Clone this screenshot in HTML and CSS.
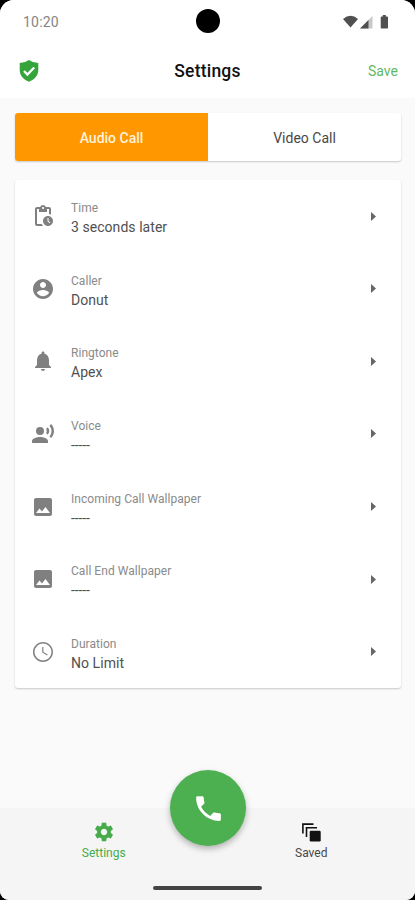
FILE: index.html
```html
<!DOCTYPE html>
<html lang="en">
<head>
<meta charset="utf-8">
<meta name="viewport" content="width=device-width, initial-scale=1">
<title>Settings</title>
<link rel="stylesheet" href="styles.css">
</head>
<body>
<div class="screen">
  <div class="statusbar">
    <span class="clock">10:20</span>
    <span class="camera"></span>
    <svg class="status-icons" width="46" height="14" viewBox="0 0 46 14">
      <path d="M0 4Q7.500-2.500 15 4L7.500 12.500Z" fill="#505050"/>
      <path d="M29.500 1V13.500H17Z" fill="#c9c9c9"/>
      <path d="M25.500 5V13.500H17Z" fill="#505050"/>
      <path d="M38.500 1.500h1.300V0h3v1.500h1.400q.8 0 .8.800v10.400q0 .8-.8.800h-5.700q-.8 0-.8-.8V2.300q0-.8.800-.8Z" fill="#505050"/>
    </svg>
  </div>
  <header class="appbar">
    <svg class="shield" width="24" height="24" viewBox="0 0 24 24">
      <path d="M12 1Q8.500 3.700 2.700 4.100V11c0 5.500 3.600 9.500 9.300 11.700 5.700-2.200 9.300-6.200 9.300-11.700V4.100Q15.500 3.700 12 1Z" fill="#35a53b"/>
      <path d="M7 12l3.400 3.500 6.800-7" fill="none" stroke="#fff" stroke-width="2.300"/>
    </svg>
    <h1 class="title">Settings</h1>
    <span class="save">Save</span>
  </header>
  <main class="content">
    <div class="tabs">
      <div class="tab tab-active">Audio Call</div>
      <div class="tab">Video Call</div>
    </div>
    <div class="card">
      <div class="row">
        <svg class="icon" viewBox="0 0 24 24"><path d="M17 12c-2.760 0-5 2.240-5 5s2.240 5 5 5 5-2.240 5-5-2.240-5-5-5zm1.650 7.350L16.500 17.200V14h1v2.790l1.850 1.850-.7.710zM18 3h-3.180C14.400 1.840 13.300 1 12 1s-2.400.84-2.820 2H6c-1.100 0-2 .9-2 2v15c0 1.100.9 2 2 2h6.110a6.743 6.743 0 0 1-1.420-2H6V5h2v3h8V5h2v5.080c.71.100 1.380.310 2 .600V5c0-1.100-.9-2-2-2zm-6 2c-.55 0-1-.45-1-1s.45-1 1-1 1 .45 1 1-.45 1-1 1z"/></svg>
        <div class="texts"><span class="label">Time</span><span class="value">3 seconds later</span></div>
        <svg class="arrow" viewBox="0 0 5 9"><path d="M0 0L5 4.500 0 9Z"/></svg>
      </div>
      <div class="row">
        <svg class="icon" viewBox="0 0 24 24"><path d="M12 2C6.480 2 2 6.480 2 12s4.480 10 10 10 10-4.480 10-10S17.520 2 12 2zm0 3c1.660 0 3 1.340 3 3s-1.340 3-3 3-3-1.340-3-3 1.340-3 3-3zm0 14.200c-2.500 0-4.710-1.280-6-3.220.03-1.990 4-3.080 6-3.080 1.990 0 5.970 1.090 6 3.080-1.290 1.940-3.500 3.220-6 3.220z"/></svg>
        <div class="texts"><span class="label">Caller</span><span class="value">Donut</span></div>
        <svg class="arrow" viewBox="0 0 5 9"><path d="M0 0L5 4.500 0 9Z"/></svg>
      </div>
      <div class="row">
        <svg class="icon" viewBox="0 0 24 24"><path d="M12 22c1.100 0 2-.9 2-2h-4c0 1.100.89 2 2 2zm6-6v-5c0-3.070-1.640-5.640-4.500-6.320V4c0-.83-.67-1.500-1.500-1.500s-1.500.67-1.500 1.500v.68C7.630 5.360 6 7.920 6 11v5l-2 2v1h16v-1l-2-2z"/></svg>
        <div class="texts"><span class="label">Ringtone</span><span class="value">Apex</span></div>
        <svg class="arrow" viewBox="0 0 5 9"><path d="M0 0L5 4.500 0 9Z"/></svg>
      </div>
      <div class="row">
        <svg class="icon" viewBox="0 0 24 24"><circle cx="9" cy="9" r="4"/><path d="M9 15c-2.670 0-8 1.340-8 4v2h16v-2c0-2.660-5.330-4-8-4zm7.760-9.640l-1.680 1.690c.84 1.180.84 2.710 0 3.890l1.680 1.690c2.020-2.020 2.020-5.070 0-7.270zM20.070 2l-1.630 1.630c2.770 3.020 2.770 7.560 0 10.740L20.070 16c3.900-3.890 3.910-9.950 0-14z"/></svg>
        <div class="texts"><span class="label">Voice</span><span class="value dashes">-----</span></div>
        <svg class="arrow" viewBox="0 0 5 9"><path d="M0 0L5 4.500 0 9Z"/></svg>
      </div>
      <div class="row">
        <svg class="icon" viewBox="0 0 24 24"><path d="M21 19V5c0-1.100-.9-2-2-2H5c-1.100 0-2 .9-2 2v14c0 1.100.9 2 2 2h14c1.100 0 2-.9 2-2zM8.500 13.500l2.500 3.010L14.500 12l4.500 6H5l3.500-4.500z"/></svg>
        <div class="texts"><span class="label">Incoming Call Wallpaper</span><span class="value dashes">-----</span></div>
        <svg class="arrow" viewBox="0 0 5 9"><path d="M0 0L5 4.500 0 9Z"/></svg>
      </div>
      <div class="row">
        <svg class="icon" viewBox="0 0 24 24"><path d="M21 19V5c0-1.100-.9-2-2-2H5c-1.100 0-2 .9-2 2v14c0 1.100.9 2 2 2h14c1.100 0 2-.9 2-2zM8.500 13.500l2.500 3.010L14.500 12l4.500 6H5l3.500-4.500z"/></svg>
        <div class="texts"><span class="label">Call End Wallpaper</span><span class="value dashes">-----</span></div>
        <svg class="arrow" viewBox="0 0 5 9"><path d="M0 0L5 4.500 0 9Z"/></svg>
      </div>
      <div class="row">
        <svg class="icon" viewBox="0 0 24 24"><path d="M11.990 2C6.470 2 2 6.480 2 12s4.470 10 9.990 10C17.520 22 22 17.520 22 12S17.520 2 11.990 2zM12 20.500a8.500 8.500 0 1 1 0-17 8.500 8.500 0 0 1 0 17zM12.400 7H11.200v5.600l4.900 3 .65-1-4.350-2.600z"/></svg>
        <div class="texts"><span class="label">Duration</span><span class="value">No Limit</span></div>
        <svg class="arrow" viewBox="0 0 5 9"><path d="M0 0L5 4.500 0 9Z"/></svg>
      </div>
    </div>
  </main>
  <nav class="bottombar">
    <div class="nav-item nav-active">
      <svg width="22" height="22" viewBox="0 0 24 24"><path d="M19.430 12.980c.04-.32.07-.64.07-.98s-.03-.66-.07-.98l2.110-1.650c.19-.15.24-.42.12-.64l-2-3.460c-.12-.22-.39-.3-.61-.22l-2.490 1c-.52-.4-1.080-.73-1.690-.98l-.38-2.650C14.460 2.180 14.250 2 14 2h-4c-.25 0-.46.18-.49.42l-.38 2.650c-.61.25-1.170.59-1.690.98l-2.490-1c-.23-.09-.49 0-.61.22l-2 3.460c-.13.22-.07.49.12.64l2.110 1.650c-.04.32-.07.65-.07.98s.03.66.07.98l-2.110 1.650c-.19.15-.24.42-.12.64l2 3.460c.12.22.39.3.61.22l2.490-1c.52.4 1.080.73 1.690.98l.38 2.650c.03.24.24.42.49.42h4c.25 0 .46-.18.49-.42l.38-2.650c.61-.25 1.170-.59 1.690-.98l2.490 1c.23.09.49 0 .61-.22l2-3.460c.12-.22.07-.49-.12-.64l-2.110-1.650zM12 15.500c-1.930 0-3.500-1.570-3.500-3.500s1.570-3.500 3.500-3.500 3.500 1.570 3.500 3.500-1.570 3.500-3.500 3.500z"/></svg>
      <span class="nav-label">Settings</span>
    </div>
    <div class="nav-item">
      <svg width="22" height="22" viewBox="0 0 22 22"><path d="M2.900 12.500V3.100H13.500M6.500 16V6.700H17" fill="none" stroke="#111" stroke-width="1.600"/><rect x="9.700" y="9.700" width="11" height="10.800" rx="1.200" fill="#111"/></svg>
      <span class="nav-label">Saved</span>
    </div>
    <div class="fab">
      <svg width="33" height="33" viewBox="0 0 24 24"><path d="M6.620 10.790c1.440 2.830 3.760 5.140 6.590 6.590l2.200-2.200c.27-.27.67-.36 1.020-.24 1.120.37 2.330.57 3.570.57.55 0 1 .45 1 1V20c0 .55-.45 1-1 1-9.390 0-17-7.610-17-17 0-.55.45-1 1-1h3.500c.55 0 1 .45 1 1 0 1.250.2 2.450.57 3.570.11.35.03.74-.25 1.020l-2.200 2.200z"/></svg>
    </div>
    <span class="home-indicator"></span>
  </nav>
</div>
</body>
</html>
```
FILE: styles.css
```css
* { box-sizing: border-box; }
body {
  margin: 0;
  background: #000;
  font-family: Roboto, "Liberation Sans", sans-serif;
}
.screen {
  width: 415px;
  height: 900px;
  display: flex;
  flex-direction: column;
  background: #fafafa;
  border-radius: 14px 14px 9px 9px;
  overflow: hidden;
}
.statusbar {
  height: 43px;
  flex: none;
  display: grid;
  grid-template-columns: 1fr 24px 1fr;
  align-items: center;
  padding: 0 26px 0 23px;
  background: #fff;
}
.clock { font-size: 14px; letter-spacing: 0.2px; color: #858585; padding-top: 1px; }
.camera { width: 24px; height: 24px; border-radius: 50%; background: #000; margin: -1px 0 0 1.500px; }
.status-icons { justify-self: end; }
.appbar {
  height: 55px;
  flex: none;
  display: grid;
  grid-template-columns: 1fr auto 1fr;
  align-items: center;
  padding: 0 17px;
  background: #fff;
}
.title { margin: 0; font-size: 17.500px; font-weight: 500; letter-spacing: 0.2px; color: #111; line-height: 24px; }
.save { justify-self: end; font-size: 14px; color: #5fb963; }
.content { flex: 1; padding: 15px 14px 0 15px; }
.tabs {
  height: 48px;
  display: flex;
  border-radius: 3px;
  overflow: hidden;
  background: #fff;
}
.tabs, .card { box-shadow: 0 1px 2px rgba(0, 0, 0, 0.2); }
.tab {
  flex: 1;
  display: flex;
  align-items: center;
  justify-content: center;
  font-size: 14px;
  color: #484848;
  padding-top: 2px;
}
.tab-active { background: #ff9800; color: #fff1dc; font-weight: 500; }
.card {
  margin-top: 19px;
  height: 508px;
  display: grid;
  grid-template-rows: repeat(7, 1fr);
  background: #fff;
  border-radius: 3px;
}
.row { display: flex; align-items: center; padding: 0 25px 0 16px; }
.icon { width: 24px; height: 24px; fill: #808080; }
.texts { flex: 1; display: flex; flex-direction: column; margin-left: 16px; padding-top: 4px; }
.label { font-size: 12px; letter-spacing: 0.04px; line-height: 18px; color: #8a8a8a; }
.value { font-size: 14px; letter-spacing: 0.05px; line-height: 20px; color: #505050; }
.dashes { letter-spacing: -0.1px; }
.arrow { width: 5px; height: 9px; fill: #666; }
.bottombar {
  position: relative;
  height: 92px;
  flex: none;
  display: grid;
  grid-template-columns: 1fr 1fr;
  background: #f5f5f5;
}
.nav-item {
  display: flex;
  flex-direction: column;
  align-items: center;
  padding-top: 13px;
  color: #484848;
}
.nav-active { color: #45ac4a; }
.nav-active svg { fill: #45ac4a; }
.nav-label { font-size: 12px; line-height: 14px; margin-top: 3px; }
.fab {
  position: absolute;
  left: 170px;
  top: -38px;
  width: 76px;
  height: 76px;
  display: flex;
  align-items: center;
  justify-content: center;
  border-radius: 50%;
  background: #4caf50;
  box-shadow: 0 3px 6px rgba(0, 0, 0, 0.28);
}
.fab svg { fill: #fff; }
.home-indicator {
  position: absolute;
  left: 153px;
  bottom: 10px;
  width: 109px;
  height: 4px;
  border-radius: 2px;
  background: #444;
}
```
